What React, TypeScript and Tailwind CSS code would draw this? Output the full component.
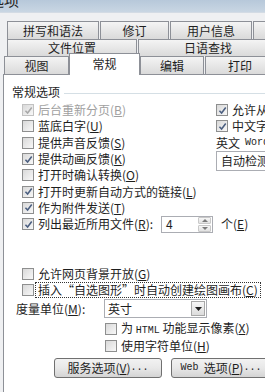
import type { ReactNode } from "react";

const mono = "font-['Liberation_Mono',monospace]";

function K({ k }: { k: string }) {
  return (
    <>
      (<span className="underline underline-offset-1">{k}</span>)
    </>
  );
}

function Box({ checked, disabled }: { checked?: boolean; disabled?: boolean }) {
  return (
    <span
      className={
        "flex h-[12px] w-[12px] shrink-0 items-center justify-center border bg-linear-to-br from-[#d9d9d9] to-[#f8f8f8] " +
        (disabled ? "border-[#c2c2c2]" : "border-[#8e8f8f]")
      }
    >
      {checked && (
        <svg viewBox="0 0 10 10" className="h-[9px] w-[9px]">
          <path
            d="M1.6 5.2 L4 7.8 L8.6 1.6"
            fill="none"
            stroke={disabled ? "#a8a8a8" : "#4b5f80"}
            strokeWidth="1.7"
          />
        </svg>
      )}
    </span>
  );
}

function Check({
  checked,
  disabled,
  children,
  className = "",
}: {
  checked?: boolean;
  disabled?: boolean;
  children: ReactNode;
  className?: string;
}) {
  return (
    <div className={"flex h-[16.3px] items-center whitespace-nowrap " + className}>
      <Box checked={checked} disabled={disabled} />
      <span className={"ml-[4px] " + (disabled ? "text-[#a0a0a0]" : "text-[#1e1e1e]")}>{children}</span>
    </div>
  );
}

function Tab({ label, w }: { label: string; w: string }) {
  return (
    <div
      className={
        "flex h-full shrink-0 items-center justify-center border-x border-t border-[#8d9097] bg-linear-to-b from-[#f4f4f4] to-[#dadada] text-[#1e1e1e] " +
        w
      }
    >
      {label}
    </div>
  );
}

function Button({ children, w }: { children: ReactNode; w: string }) {
  return (
    <div
      className={
        "flex h-[20px] shrink-0 items-center justify-center rounded-[3px] border border-[#707070] bg-linear-to-b from-[#f2f2f2] via-[#e8e8e8] to-[#d4d4d4] whitespace-nowrap text-[#1e1e1e] " +
        w
      }
    >
      {children}
    </div>
  );
}

export default function App() {
  return (
    <div className="flex h-[392px] w-[265px] flex-col overflow-hidden bg-[#eff0f2] font-['Noto_Sans_CJK_SC',sans-serif] text-[12px] leading-[16px]">
      {/* title bar, mostly cropped */}
      <div className="h-[13px] shrink-0 overflow-hidden border-b border-[#d3dbe4] bg-linear-to-b from-[#b7c8da] to-[#c9d6e3]">
        <div className="-ml-[11px] -mt-[10px] text-[15px] leading-[20px] text-[#222]">选项</div>
      </div>

      <div className="mt-[8px] flex shrink-0 flex-col">
        <div className="flex h-[18px] gap-[1px] pl-[7px]">
          <Tab label="拼写和语法" w="w-[92px]" />
          <Tab label="修订" w="w-[69px]" />
          <Tab label="用户信息" w="w-[82px]" />
          <Tab label="" w="w-[40px]" />
        </div>
        <div className="flex h-[17px] gap-[1px] pl-[7px]">
          <Tab label="文件位置" w="w-[130px]" />
          <Tab label="日语查找" w="w-[140px]" />
        </div>
        <div className="flex h-[18px] items-end pl-[4px]">
          <Tab label="视图" w="w-[65px]" />
          <div className="relative z-10 -mb-px flex h-[22px] w-[71px] shrink-0 items-start justify-center border-x border-t border-[#8d9097] bg-white pt-[2px] text-[#1e1e1e]">
            常规
          </div>
          <Tab label="编辑" w="w-[64px]" />
          <div className="ml-[1px] h-full">
            <Tab label="打印" w="w-[70px]" />
          </div>
        </div>
      </div>

      <div className="ml-[3px] flex-1 border-l border-t border-[#8d9097] bg-white">
        <div className="mt-[9px] flex h-[16px] items-center pl-[8px]">
          <span className="text-[#1e1e1e]">常规选项</span>
          <span className="ml-[4px] mt-[3px] h-px flex-1 bg-[#d5dfe5]" />
        </div>

        <div className="mt-[2px] flex pl-[18px]">
          <div className="w-[194px] shrink-0">
            <Check checked disabled>
              后台重新分页<K k="B" />
            </Check>
            <Check>
              蓝底白字<K k="U" />
            </Check>
            <Check>
              提供声音反馈<K k="S" />
            </Check>
            <Check checked>
              提供动画反馈<K k="K" />
            </Check>
            <Check>
              打开时确认转换<K k="O" />
            </Check>
            <Check checked>
              打开时更新自动方式的链接<K k="L" />
            </Check>
            <Check checked>
              作为附件发送<K k="T" />
            </Check>
            <div className="flex h-[16.3px] items-center whitespace-nowrap">
              <Box checked />
              <span className="ml-[4px] w-[123px] shrink-0 text-[#1e1e1e]">
                列出最近所用文件<K k="R" />:
              </span>
              <div className="flex h-[17px] w-[52px] shrink-0 items-center border border-[#abadb3] bg-white">
                <span className="flex-1 pl-[4px] text-[#1e1e1e]">4</span>
                <div className="mr-px flex h-[15px] w-[13px] flex-col gap-px">
                  <div className="flex flex-1 items-center justify-center rounded-[1px] border border-[#c9c9c9] bg-linear-to-b from-[#f6f6f6] to-[#e2e2e2]">
                    <svg viewBox="0 0 6 3" className="h-[3px] w-[6px]">
                      <path d="M0 3 L3 0 L6 3 Z" fill="#7a7a7a" />
                    </svg>
                  </div>
                  <div className="flex flex-1 items-center justify-center rounded-[1px] border border-[#c9c9c9] bg-linear-to-b from-[#f6f6f6] to-[#e2e2e2]">
                    <svg viewBox="0 0 6 3" className="h-[3px] w-[6px]">
                      <path d="M0 0 L6 0 L3 3 Z" fill="#7a7a7a" />
                    </svg>
                  </div>
                </div>
              </div>
              <span className="ml-[8px] text-[#1e1e1e]">
                个<K k="E" />
              </span>
            </div>
          </div>

          <div className="flex flex-col whitespace-nowrap">
            <Check checked>允许从“阅读版式”启动</Check>
            <Check checked>中文字体也应用于西文</Check>
            <div className="flex h-[16px] items-center text-[#1e1e1e]">
              英文<span className={mono + " ml-[5px] text-[10px]"}>Word 6.0/95</span> 文档
            </div>
            <div className="flex h-[20px] w-[120px] items-center border border-[#abadb3] bg-white pl-[4px] text-[#1e1e1e]">
              自动检测
            </div>
          </div>
        </div>

        <div className="mt-[33px] pl-[18px]">
          <Check>
            允许网页背景开放<K k="G" />
          </Check>
          <div className="flex h-[16.5px] items-center whitespace-nowrap">
            <Box />
            <span className="ml-[1px] border border-dotted border-[#333] px-[2px] leading-[14px] text-[#1e1e1e]">
              插入“自选图形”时自动创建绘图画布<K k="C" />
            </span>
          </div>
          <div className="mt-[1px] -ml-[6px] flex h-[19px] items-center whitespace-nowrap">
            <span className="w-[88px] shrink-0 text-[#1e1e1e]">
              度量单位<K k="M" />:
            </span>
            <div className="flex h-[19px] w-[103px] items-center border border-[#abadb3] bg-white">
              <span className="flex-1 pl-[3px] text-[#1e1e1e]">英寸</span>
              <div className="mr-px flex h-[15px] w-[14px] items-center justify-center border border-[#a8a8a8] bg-linear-to-b from-[#f6f6f6] to-[#dcdcdc]">
                <svg viewBox="0 0 7 4" className="h-[4px] w-[7px]">
                  <path d="M0 0 L7 0 L3.5 4 Z" fill="#1e1e1e" />
                </svg>
              </div>
            </div>
          </div>
          <div className="mt-[3px] ml-[83px]">
            <Check>
              为 <span className={mono + " text-[10px]"}>HTML</span> 功能显示像素<K k="X" />
            </Check>
            <Check>
              使用字符单位<K k="H" />
            </Check>
          </div>
          <div className="mt-[4px] ml-[32px] flex gap-[9px]">
            <Button w="w-[108px]">
              服务选项<K k="V" />
              <span className={mono + " text-[10px]"}>...</span>
            </Button>
            <Button w="w-[100px]">
              <span className={mono + " mr-[5px] text-[10px]"}>Web</span>选项<K k="P" />
              <span className={mono + " text-[10px]"}>...</span>
            </Button>
          </div>
        </div>
      </div>
    </div>
  );
}
